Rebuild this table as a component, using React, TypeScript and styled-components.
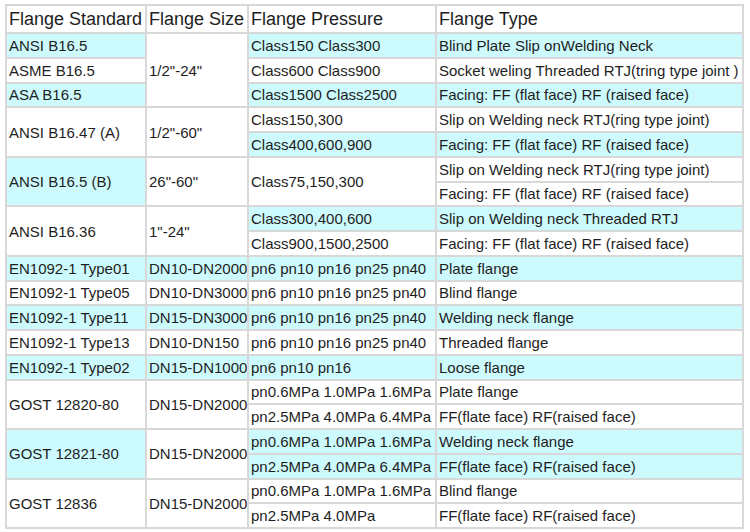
import styled, { createGlobalStyle } from "styled-components";

const GlobalStyle = createGlobalStyle`
  body {
    margin: 0;
    background: #ffffff;
    font-family: "Liberation Sans", Arial, sans-serif;
  }
`;

const Page = styled.div`
  padding: 4px 0 0 5px;
`;

const Table = styled.table`
  border-collapse: collapse;
  width: 737px;
  table-layout: fixed;
  color: #1e1e1e;
`;

const HeadRow = styled.tr`
  height: 28px;
`;

const Row = styled.tr`
  height: 24.75px;
`;

const HeadCell = styled.th`
  border: 2px solid #d8d8d8;
  padding: 0 2px;
  font-size: 18px;
  font-weight: normal;
  text-align: left;
  white-space: nowrap;
  background: #ffffff;
`;

const Cell = styled.td<{ $tint?: boolean }>`
  border: 2px solid #d8d8d8;
  padding: 0 2px;
  font-size: 15px;
  text-align: left;
  vertical-align: middle;
  white-space: nowrap;
  overflow: hidden;
  background: ${(p) => (p.$tint ? "#cdfafd" : "#ffffff")};
`;

type C = { text: string; tint?: boolean; span?: number };

// 한 줄에 들어가는 칸들 (rowspan 으로 빠진 칸은 생략)
const rows: C[][] = [
  [
    { text: "ANSI B16.5", tint: true },
    { text: "1/2\"-24\"", span: 3 },
    { text: "Class150 Class300", tint: true },
    { text: "Blind Plate Slip onWelding Neck", tint: true },
  ],
  [
    { text: "ASME B16.5" },
    { text: "Class600 Class900" },
    { text: "Socket weling Threaded RTJ(tring type joint )" },
  ],
  [
    { text: "ASA B16.5", tint: true },
    { text: "Class1500 Class2500", tint: true },
    { text: "Facing: FF (flat face) RF (raised face)", tint: true },
  ],
  [
    { text: "ANSI B16.47 (A)", span: 2 },
    { text: "1/2\"-60\"", span: 2 },
    { text: "Class150,300" },
    { text: "Slip on Welding neck RTJ(ring type joint)" },
  ],
  [
    { text: "Class400,600,900", tint: true },
    { text: "Facing: FF (flat face) RF (raised face)", tint: true },
  ],
  [
    { text: "ANSI B16.5 (B)", span: 2, tint: true },
    { text: "26\"-60\"", span: 2 },
    { text: "Class75,150,300", span: 2 },
    { text: "Slip on Welding neck RTJ(ring type joint)" },
  ],
  [{ text: "Facing: FF (flat face) RF (raised face)" }],
  [
    { text: "ANSI B16.36", span: 2 },
    { text: "1\"-24\"", span: 2 },
    { text: "Class300,400,600", tint: true },
    { text: "Slip on Welding neck Threaded RTJ", tint: true },
  ],
  [
    { text: "Class900,1500,2500" },
    { text: "Facing: FF (flat face) RF (raised face)" },
  ],
  [
    { text: "EN1092-1 Type01", tint: true },
    { text: "DN10-DN2000", tint: true },
    { text: "pn6 pn10 pn16 pn25 pn40", tint: true },
    { text: "Plate flange", tint: true },
  ],
  [
    { text: "EN1092-1 Type05" },
    { text: "DN10-DN3000" },
    { text: "pn6 pn10 pn16 pn25 pn40" },
    { text: "Blind flange" },
  ],
  [
    { text: "EN1092-1 Type11", tint: true },
    { text: "DN15-DN3000", tint: true },
    { text: "pn6 pn10 pn16 pn25 pn40", tint: true },
    { text: "Welding neck flange", tint: true },
  ],
  [
    { text: "EN1092-1 Type13" },
    { text: "DN10-DN150" },
    { text: "pn6 pn10 pn16 pn25 pn40" },
    { text: "Threaded flange" },
  ],
  [
    { text: "EN1092-1 Type02", tint: true },
    { text: "DN15-DN1000", tint: true },
    { text: "pn6 pn10 pn16", tint: true },
    { text: "Loose flange", tint: true },
  ],
  [
    { text: "GOST 12820-80", span: 2 },
    { text: "DN15-DN2000", span: 2 },
    { text: "pn0.6MPa 1.0MPa 1.6MPa" },
    { text: "Plate flange" },
  ],
  [
    { text: "pn2.5MPa 4.0MPa 6.4MPa" },
    { text: "FF(flate face) RF(raised face)" },
  ],
  [
    { text: "GOST 12821-80", span: 2, tint: true },
    { text: "DN15-DN2000", span: 2 },
    { text: "pn0.6MPa 1.0MPa 1.6MPa", tint: true },
    { text: "Welding neck flange", tint: true },
  ],
  [
    { text: "pn2.5MPa 4.0MPa 6.4MPa", tint: true },
    { text: "FF(flate face) RF(raised face)", tint: true },
  ],
  [
    { text: "GOST 12836", span: 2 },
    { text: "DN15-DN2000", span: 2 },
    { text: "pn0.6MPa 1.0MPa 1.6MPa" },
    { text: "Blind flange" },
  ],
  [
    { text: "pn2.5MPa 4.0MPa" },
    { text: "FF(flate face) RF(raised face)" },
  ],
];

export default function App() {
  return (
    <Page>
      <GlobalStyle />
      <Table>
        <colgroup>
          <col style={{ width: 140 }} />
          <col style={{ width: 102 }} />
          <col style={{ width: 188 }} />
          <col style={{ width: 307 }} />
        </colgroup>
        <thead>
          <HeadRow>
            <HeadCell>Flange Standard</HeadCell>
            <HeadCell>Flange Size</HeadCell>
            <HeadCell>Flange Pressure</HeadCell>
            <HeadCell>Flange Type</HeadCell>
          </HeadRow>
        </thead>
        <tbody>
          {rows.map((cells, i) => (
            <Row key={i}>
              {cells.map((c, j) => (
                <Cell key={j} rowSpan={c.span} $tint={c.tint}>
                  {c.text}
                </Cell>
              ))}
            </Row>
          ))}
        </tbody>
      </Table>
    </Page>
  );
}
